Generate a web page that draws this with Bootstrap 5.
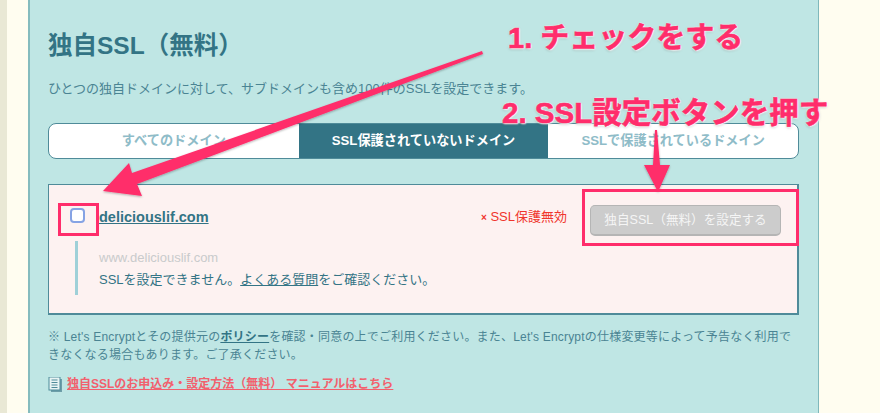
<!DOCTYPE html>
<html lang="ja"><head><meta charset="utf-8">
<link href="https://cdn.jsdelivr.net/npm/bootstrap@5.3.0/dist/css/bootstrap.min.css" rel="stylesheet">
<style>
html,body{height:413px;overflow:hidden}
body{background:#fffdf0;font-family:"Liberation Sans","Noto Sans CJK JP",sans-serif;color:#337485;position:relative;width:880px}
.edge-strip{width:7px;height:413px;background:#e9e8d5;flex:none}
.gutter{width:21px;flex:none}
.panel{width:791px;height:413px;background:#bfe6e4;border-left:2px solid #85bcbe;border-right:1px solid #7fb8bb;padding:0 19px 0 18px;flex:none}
.ttl{font-size:24.5px;font-weight:700;line-height:32px;margin:30px 0 0;color:#337485}
.sub{font-size:13px;line-height:18px;margin:18px 0 0;color:#4a8493}
.tabset{height:36px;margin-top:25px;border:1px solid #4f8b99;border-radius:8px;overflow:hidden;background:#fff}
.tabitem{flex:1 1 0;font-size:13.2px;font-weight:700;color:#8fbcc8}
.tabitem.on{background:#337485;color:#fff}
.domainbox{height:131px;margin-top:25px;background:#fdf2f1;border:1px solid #4f8b99;border-bottom-width:2px;border-right-width:2px;padding:20px 16px 0 21px}
.fakecheck{width:15px;height:15px;border:2px solid #86a3e4;border-radius:4px;background:#fff;margin:3px 14px 0 0;flex:none}
.dname{font-size:14.5px;font-weight:700;color:#337485;text-decoration:underline;margin-top:2px}
.bad{font-size:13px;color:#f0352c;margin:2px 23px 0 auto}
.bad b{font-size:10px}
.setbtn{width:191px;height:31px;background:#ccc;border:1px solid #b5b5b5;border-bottom-width:2px;border-radius:5px;color:#f5f5f5;font-size:12.6px;--bs-btn-padding-y:0;--bs-btn-padding-x:0}
.detail{margin:5px 0 0 5px;border-left:3px solid #9fd0d8;height:54px;padding:7px 0 0 21px;font-size:13px;line-height:21px}
.wwwname{color:#c9cbcc;font-size:13px;line-height:20px;margin-bottom:1px}
.detail a,.note a{color:#337485}
.note{font-size:12px;line-height:18px;margin:13px 0 0;letter-spacing:.2px;color:#4a8493}
.manual{margin-top:11px;font-size:12px;font-weight:700;line-height:18px}
.manual a{color:#f2606d}
.overlay{position:absolute;left:0;top:0}
.callout{position:absolute;color:#ff2d6b;font-weight:700;line-height:1;white-space:nowrap;-webkit-text-stroke:.6px #ff2d6b;text-shadow:0 0 2px #fff,0 0 2px #fff,1px 1px 2px #fff,0 1px 3px rgba(0,0,0,.35)}
.c1{left:508px;top:24px;font-size:29px}
.c2{left:502px;top:98px;font-size:29.500px}
</style></head>
<body>
<div class="d-flex">
<div class="edge-strip"></div><div class="gutter"></div>
<main class="panel">
<h1 class="ttl">独自SSL（無料）</h1>
<p class="sub">ひとつの独自ドメインに対して、サブドメインも含め100件のSSLを設定できます。</p>
<div class="tabset d-flex">
<div class="tabitem d-flex align-items-center justify-content-center">すべてのドメイン</div>
<div class="tabitem on d-flex align-items-center justify-content-center">SSL保護されていないドメイン</div>
<div class="tabitem d-flex align-items-center justify-content-center">SSLで保護されているドメイン</div>
</div>
<section class="domainbox">
<div class="d-flex align-items-start">
<span class="fakecheck"></span><a class="dname" href="#">deliciouslif.com</a>
<span class="bad"><b>×</b> SSL保護無効</span>
<button class="btn setbtn" type="button">独自SSL（無料）を設定する</button>
</div>
<div class="detail">
<div class="wwwname">www.deliciouslif.com</div>
<div>SSLを設定できません。<a href="#">よくある質問</a>をご確認ください。</div>
</div>
</section>
<p class="note">※ Let's Encryptとその提供元の<a href="#" class="fw-bold">ポリシー</a>を確認・同意の上でご利用ください。また、Let's Encryptの仕様変更等によって予告なく利用できなくなる場合もあります。ご了承ください。</p>
<div class="manual d-flex align-items-center gap-1">
<svg width="15" height="15" viewBox="0 0 15 15"><rect x="3" y="2" width="11" height="13" fill="#6d9ea8"/><rect x="1" y="0" width="11" height="13" fill="#e8f4f4" stroke="#4f8b99"/><path d="M3.500 3h6M3.500 5.500h6M3.500 8h6M3.500 10.500h6" stroke="#4f8b99"/></svg>
<a href="#">独自SSLのお申込み・設定方法（無料） マニュアルはこちら</a></div>
</main>
</div>
<svg class="overlay" width="880" height="413" viewBox="0 0 880 413">
<defs><filter id="sh" x="-10%" y="-10%" width="120%" height="120%"><feDropShadow dx="0" dy="1" stdDeviation="1" flood-color="#000" flood-opacity=".3"/></filter></defs>
<g fill="#ff2d6b" filter="url(#sh)">
<path d="M482 51 483 54 137 184 142 196 103 191 129 163 132 173Z"/>
<path d="M655 130 657 130 660 165 670 165 658 192 644 165 653 165Z"/>
</g>
<g fill="none" stroke="#ff2d6b" stroke-width="3">
<rect x="59.500" y="204.500" width="38" height="30"/>
<rect x="583.500" y="190.500" width="214" height="54"/>
</g>
</svg>
<div class="callout c1">1. チェックをする</div>
<div class="callout c2">2. SSL設定ボタンを押す</div>
</body></html>
